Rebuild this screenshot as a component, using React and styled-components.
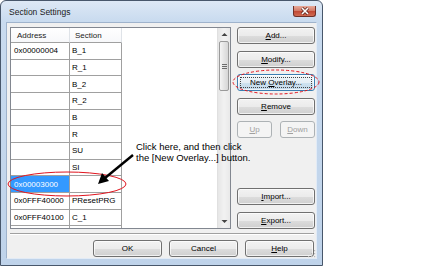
import React from "react";
import styled, { createGlobalStyle } from "styled-components";

const Global = createGlobalStyle`
  html, body { margin: 0; padding: 0; background: #ffffff; }
  body { font-family: "Liberation Sans", Arial, sans-serif; }
  #root { width: 434px; height: 268px; }
`;

const Window = styled.div`
  position: relative;
  width: 323px;
  height: 266px;
  box-sizing: border-box;
  border: 1px solid #48576b;
  border-radius: 6px 6px 0 0;
  background: linear-gradient(#dde8f5 0px, #c9dbef 20px, #bfd3ea 100%);
  display: flex;
  flex-direction: column;
`;

const TitleBar = styled.div`
  height: 20px;
  display: flex;
  align-items: center;
  padding: 0 6px 0 8px;
`;

const Title = styled.span`
  font-size: 8.5px;
  color: #1b1b1b;
  margin-top: 2px;
`;

const CloseButton = styled.div`
  margin-left: auto;
  width: 23px;
  height: 11px;
  margin-top: 1px;
  box-sizing: border-box;
  border: 1px solid #6e3028;
  border-top: none;
  border-radius: 0 0 3px 3px;
  background: linear-gradient(#e8aa9a 0%, #d37c69 45%, #c24a36 55%, #cf6a52 100%);
  display: flex;
  align-items: center;
  justify-content: center;
`;

const Client = styled.div`
  margin: 1px 5px 6px 5px;
  flex: 1;
  background: #f0f0f0;
  border: 1px solid #9fb3cc;
  border-bottom-color: #e2ebf6;
  border-right-color: #e2ebf6;
  display: flex;
  flex-direction: column;
  padding: 4px 1px 0 3px;
  position: relative;
`;

const TopArea = styled.div`
  display: flex;
  gap: 6px;
  height: 202px;
`;

const ListBox = styled.div`
  width: 221px;
  box-sizing: border-box;
  border: 1px solid #828790;
  background: #ffffff;
  display: flex;
`;

const ListContent = styled.div`
  flex: 1;
  overflow: hidden;
  font-size: 8px;
  color: #000;
`;

const HeaderRow = styled.div`
  display: flex;
  height: 15px;
`;

const HeaderCell = styled.div`
  width: ${(p) => p.$w}px;
  box-sizing: border-box;
  border-right: 1px solid #dfe3e8;
  border-bottom: 1px solid #a0a0a0;
  background: linear-gradient(#ffffff, #f7f8fa);
  padding-left: ${(p) => p.$pad}px;
  display: flex;
  align-items: center;
  color: #222;
`;

const Row = styled.div`
  display: flex;
  height: 16.667px;
`;

const Cell = styled.div`
  width: ${(p) => p.$w}px;
  box-sizing: border-box;
  border-right: 1px solid #a0a0a0;
  border-bottom: 1px solid #a0a0a0;
  padding-left: ${(p) => p.$pad}px;
  display: flex;
  align-items: center;
  white-space: nowrap;
  background: ${(p) => (p.$selected ? "#3399ff" : "#ffffff")};
  color: ${(p) => (p.$selected ? "#ffffff" : "#000000")};
`;

const ScrollBar = styled.div`
  width: 12px;
  display: flex;
  flex-direction: column;
  background: linear-gradient(to right, #e6e6e6, #f2f2f2 50%, #e9e9e9);
  border-left: 1px solid #e0e0e0;
`;

const ScrollArrow = styled.div`
  height: 12px;
  display: flex;
  align-items: center;
  justify-content: center;
`;

const ScrollTrack = styled.div`
  flex: 1;
  padding: 1px 1px;
`;

const Thumb = styled.div`
  height: 50px;
  box-sizing: border-box;
  border: 1px solid #9a9a9a;
  border-radius: 2px;
  background: linear-gradient(to right, #f4f4f4, #e4e4e4 50%, #d6d6d6);
  display: flex;
  align-items: center;
  justify-content: center;
`;

const ButtonColumn = styled.div`
  width: 78px;
  display: flex;
  flex-direction: column;
  gap: 6.5px;
`;

const ButtonGroup = styled.div`
  margin-top: auto;
  display: flex;
  flex-direction: column;
  gap: 7px;
`;

const PairRow = styled.div`
  display: flex;
  justify-content: space-between;
`;

const Button = styled.div`
  width: ${(p) => (p.$w ? `${p.$w}px` : "100%")};
  height: 17px;
  box-sizing: border-box;
  border: 1px solid ${(p) => (p.$focused ? "#3c7fb1" : p.$disabled ? "#adb2b5" : "#707070")};
  border-radius: 3px;
  background: ${(p) =>
    p.$disabled
      ? "#f4f4f4"
      : p.$focused
      ? "linear-gradient(#f0f6fa 0%, #e5eef5 50%, #cfe2ef 51%, #c0d8ea 100%)"
      : "linear-gradient(#f2f2f2 0%, #ebebeb 50%, #dddddd 51%, #cfcfcf 100%)"};
  box-shadow: inset 0 0 0 1px ${(p) => (p.$disabled ? "#f4f4f4" : "rgba(255,255,255,0.7)")};
  display: flex;
  align-items: center;
  justify-content: center;
  font-size: 8px;
  color: ${(p) => (p.$disabled ? "#a0a0a0" : "#000000")};
  position: relative;
`;

const FocusRing = styled.div`
  position: absolute;
  inset: 2px;
  border: 1px dotted #444;
`;

const Separator = styled.div`
  margin: 4px 1px 0 0;
  height: 0;
  border-top: 1px solid #a0a0a0;
  border-bottom: 1px solid #ffffff;
`;

const BottomRow = styled.div`
  margin-top: 5px;
  display: flex;
  justify-content: flex-end;
  gap: 7px;
  padding-right: 1px;
`;

const Grip = styled.svg`
  position: absolute;
  right: 0;
  bottom: 0;
`;

const Note = styled.div`
  position: absolute;
  left: 135px;
  top: 140px;
  font-family: "Liberation Sans", Arial, sans-serif;
  font-size: 9.5px;
  line-height: 11px;
  color: #000;
  white-space: nowrap;
`;

const Overlay = styled.svg`
  position: absolute;
  left: 0;
  top: 0;
  pointer-events: none;
`;

const U = styled.span`
  text-decoration: underline;
`;

const rows = [
  ["0x00000004", "B_1"],
  ["", "R_1"],
  ["", "B_2"],
  ["", "R_2"],
  ["", "B"],
  ["", "R"],
  ["", "SU"],
  ["", "SI"],
  ["0x00003000", "", true],
  ["0x0FFF40000", "PResetPRG"],
  ["0x0FFF40100", "C_1"],
  ["", ""],
];

export default function App() {
  return (
    <>
      <Global />
      <Window>
        <TitleBar>
          <Title>Section Settings</Title>
          <CloseButton>
            <svg width="10" height="8" viewBox="0 0 10 8">
              <path d="M2 1 L8 7 M8 1 L2 7" stroke="#5a231c" strokeWidth="3" />
              <path d="M2 1 L8 7 M8 1 L2 7" stroke="#ffffff" strokeWidth="1.6" />
            </svg>
          </CloseButton>
        </TitleBar>
        <Client>
          <TopArea>
            <ListBox>
              <ListContent>
                <HeaderRow>
                  <HeaderCell $w={59} $pad={6}>Address</HeaderCell>
                  <HeaderCell $w={52} $pad={5}>Section</HeaderCell>
                </HeaderRow>
                {rows.map((r, i) => (
                  <Row key={i}>
                    <Cell $w={59} $pad={3} $selected={r[2]}>{r[0]}</Cell>
                    <Cell $w={52} $pad={2}>{r[1]}</Cell>
                  </Row>
                ))}
              </ListContent>
              <ScrollBar>
                <ScrollArrow>
                  <svg width="7" height="4" viewBox="0 0 7 4"><path d="M0.5 4 L3.5 1 L6.5 4 Z" fill="#444" /></svg>
                </ScrollArrow>
                <ScrollTrack>
                  <Thumb>
                    <svg width="5" height="5" viewBox="0 0 5 5">
                      <path d="M0 0.5 H5 M0 2.5 H5 M0 4.5 H5" stroke="#6b6b6b" strokeWidth="1" />
                    </svg>
                  </Thumb>
                </ScrollTrack>
                <ScrollArrow>
                  <svg width="7" height="4" viewBox="0 0 7 4"><path d="M0.5 0 L3.5 3 L6.5 0 Z" fill="#444" /></svg>
                </ScrollArrow>
              </ScrollBar>
            </ListBox>
            <ButtonColumn>
              <Button><span><U>A</U>dd...</span></Button>
              <Button><span><U>M</U>odify...</span></Button>
              <Button $focused>
                <FocusRing />
                <span>New <U>O</U>verlay...</span>
              </Button>
              <Button><span><U>R</U>emove</span></Button>
              <PairRow>
                <Button $w={35} $disabled><span><U>U</U>p</span></Button>
                <Button $w={35} $disabled><span><U>D</U>own</span></Button>
              </PairRow>
              <ButtonGroup>
                <Button><span><U>I</U>mport...</span></Button>
                <Button><span><U>E</U>xport...</span></Button>
              </ButtonGroup>
            </ButtonColumn>
          </TopArea>
          <Separator />
          <BottomRow>
            <Button $w={69}>OK</Button>
            <Button $w={69}>Cancel</Button>
            <Button $w={69}><span><U>H</U>elp</span></Button>
          </BottomRow>
          <Grip width="10" height="10" viewBox="0 0 10 10">
            {[[8, 2], [5, 5], [8, 5], [2, 8], [5, 8], [8, 8]].map(([x, y], i) => (
              <rect key={i} x={x} y={y} width="1.2" height="1.2" fill="#b9b9b9" />
            ))}
          </Grip>
        </Client>
        <Note>
          Click here, and then click
          <br />
          the [New Overlay...] button.
        </Note>
        <Overlay width="323" height="266" viewBox="0 0 323 266">
          <ellipse cx="66" cy="183" rx="59" ry="12" fill="none" stroke="#e0141e" strokeWidth="1" />
          <ellipse cx="275" cy="81" rx="43" ry="12" fill="none" stroke="#e0141e" strokeWidth="1" strokeDasharray="3 2" />
          <path d="M132 154 L104 177" stroke="#000" strokeWidth="2.4" />
          <path d="M97 183 L101 172 L108 180 Z" fill="#000" />
        </Overlay>
      </Window>
    </>
  );
}
